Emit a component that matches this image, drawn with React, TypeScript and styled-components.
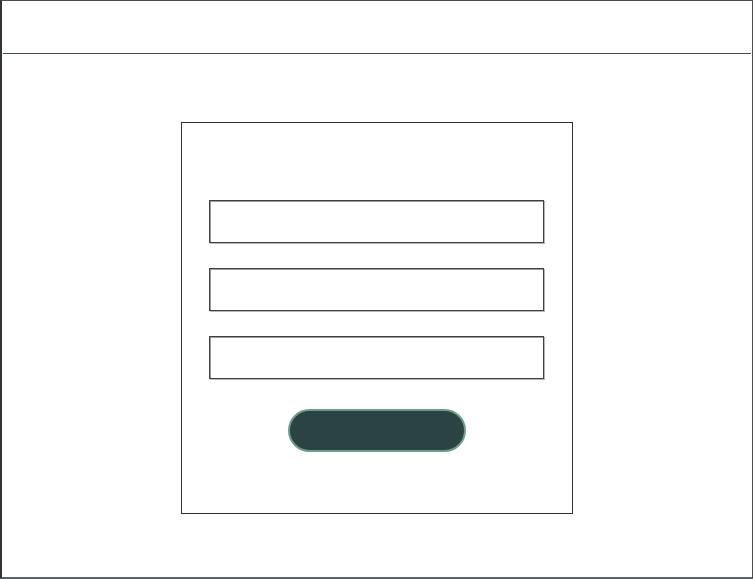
import React from 'react';
import styled, { createGlobalStyle } from 'styled-components';

const GlobalStyle = createGlobalStyle`
  html, body {
    margin: 0;
    padding: 0;
    background: #fff;
    font-family: "Liberation Sans", Arial, sans-serif;
  }
`;

const Frame = styled.div`
  box-sizing: border-box;
  width: 753px;
  height: 579px;
  border: 1px solid #4a4f50;
  border-left: 2px solid #2f3536;
  border-bottom: 2px solid #5c6263;
  display: flex;
  flex-direction: column;
  background: #fff;
`;

const Header = styled.header`
  height: 52px;
  margin: 0 1px;
  border-bottom: 1px solid #3f4a4a;
  flex-shrink: 0;
`;

const Main = styled.main`
  flex: 1;
  display: flex;
  justify-content: center;
  padding-top: 68px;
  padding-right: 1px;
`;

const Card = styled.form`
  box-sizing: border-box;
  width: 392px;
  height: 392px;
  border: 1px solid #2a3434;
  display: flex;
  flex-direction: column;
  align-items: center;
  padding-top: 77px;
  gap: 25px;
`;

const Input = styled.input`
  box-sizing: border-box;
  width: 335px;
  height: 43px;
  border: 1px solid #3d4142;
  box-shadow: inset 1px 1px 0 #9a9d9e, 1px 1px 0 #b5b8b9;
  background: #fff;
  outline: none;
  flex-shrink: 0;
`;

const Button = styled.button`
  box-sizing: border-box;
  width: 178px;
  height: 43px;
  margin-top: 5px;
  border-radius: 22px;
  background: #2b4443;
  border: 2px solid #6c9c8b;
  flex-shrink: 0;
  cursor: pointer;
`;

const App: React.FC = () => {
  return (
    <>
      <GlobalStyle />
      <Frame>
        <Header />
        <Main>
          <Card onSubmit={e => e.preventDefault()}>
            <Input type="text" />
            <Input type="text" />
            <Input type="password" />
            <Button type="submit" />
          </Card>
        </Main>
      </Frame>
    </>
  );
};

export default App;
